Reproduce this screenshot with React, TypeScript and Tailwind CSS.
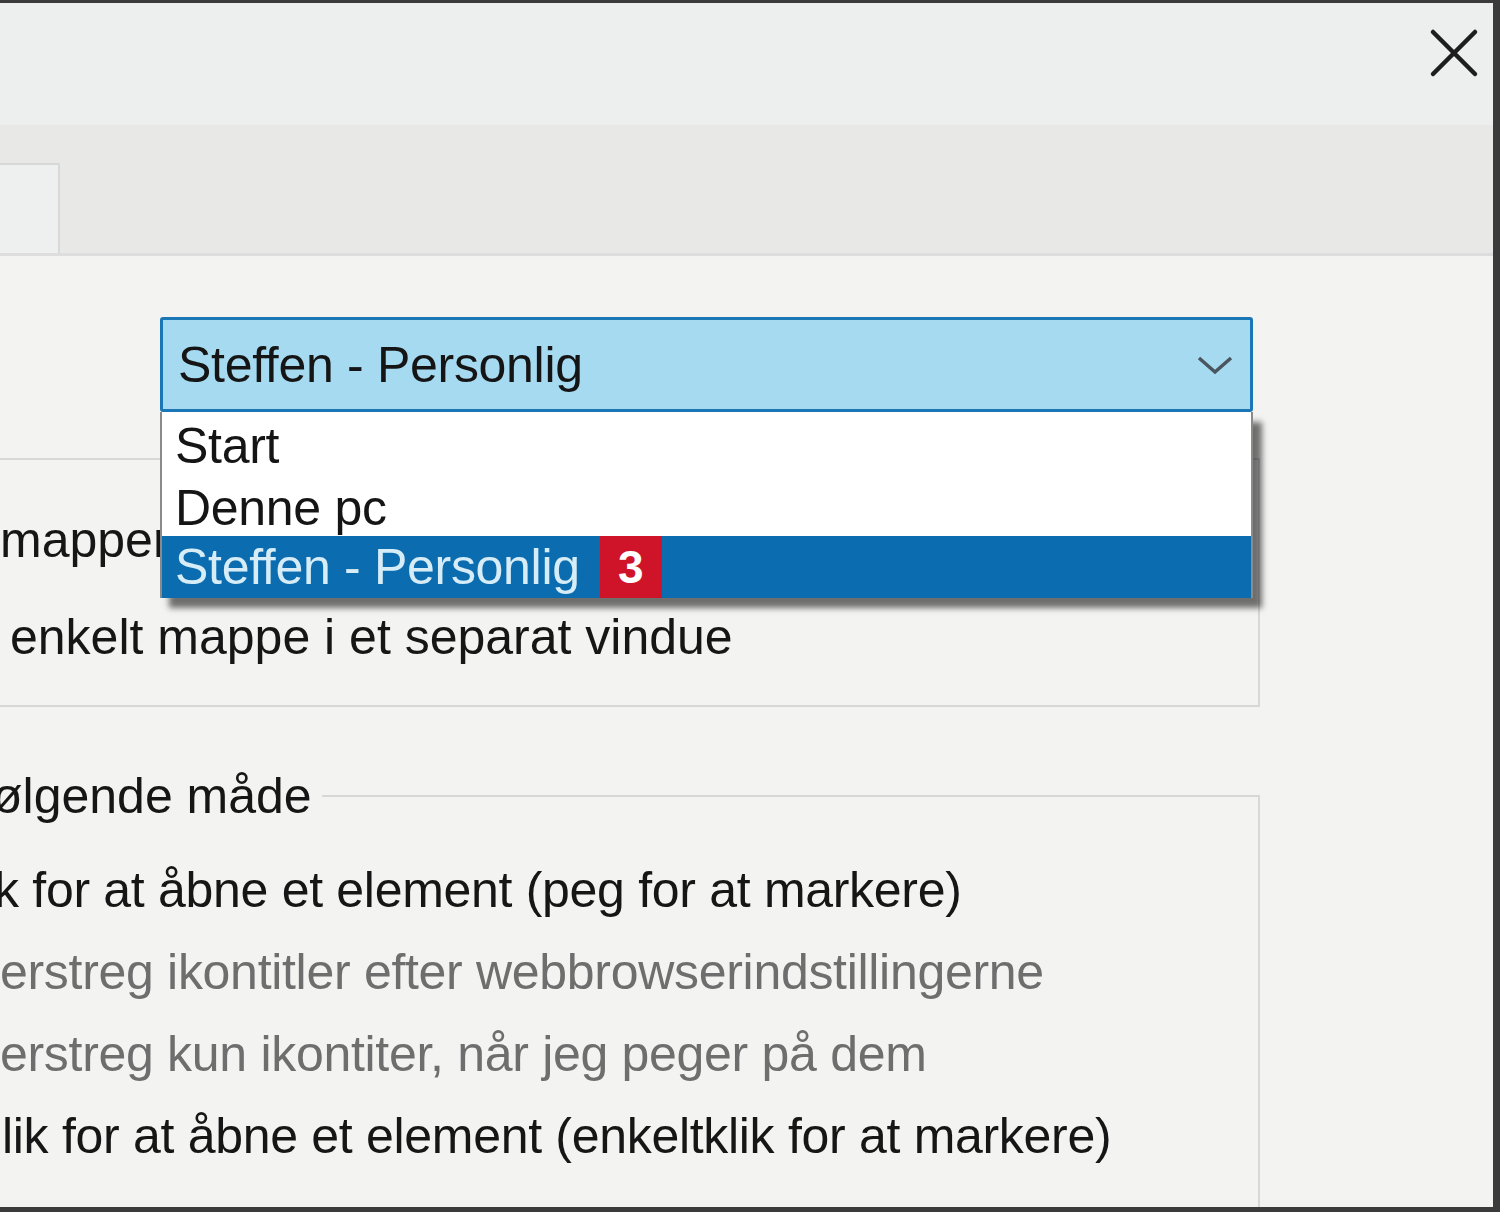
const FONT = "font-['Liberation_Sans',Arial,sans-serif]";

const OPTIONS = ["Start", "Denne pc", "Steffen - Personlig"];

const CLICK_ROWS = [
  { text: "k for at åbne et element (peg for at markere)", muted: false, indent: "-ml-[6px]" },
  { text: "erstreg ikontitler efter webbrowserindstillingerne", muted: true, indent: "ml-0" },
  { text: "erstreg kun ikontiter, når jeg peger på dem", muted: true, indent: "ml-0" },
  { text: "lik for at åbne et element (enkeltklik for at markere)", muted: false, indent: "ml-[2px]" },
];

function CloseIcon() {
  return (
    <svg width="52" height="52" viewBox="0 0 52 52" fill="none">
      <path d="M5 5 L47 47 M47 5 L5 47" stroke="#1e1e1e" strokeWidth="4.5" strokeLinecap="round" />
    </svg>
  );
}

function Chevron() {
  return (
    <svg width="38" height="24" viewBox="0 0 38 24" fill="none">
      <path d="M3 5 L19 19 L35 5" stroke="#4a5560" strokeWidth="3.5" />
    </svg>
  );
}

function ComboBox() {
  return (
    <div className="relative ml-[160px] w-[1093px] h-[95px] z-10">
      <div className="flex h-full items-center justify-between rounded-[3px] border-[3px] border-[#1b76b5] bg-[#a5daf0] pl-[15px] pr-[16px]">
        <span className="text-[50px] leading-none tracking-[-0.3px] text-[#151515]">Steffen - Personlig</span>
        <Chevron />
      </div>
      <div className="absolute left-0 right-0 top-full flex flex-col border-x-2 border-[#8a8a8a] bg-white shadow-[9px_10px_6px_rgba(0,0,0,0.55)]">
        {OPTIONS.map((o, i) =>
          i === OPTIONS.length - 1 ? (
            <div key={o} className="flex h-[62px] items-center bg-[#0b6db0] pl-[13px]">
              <span className="text-[50px] leading-none tracking-[-0.3px] text-[#d6ecf7]">{o}</span>
              <span className="ml-[20px] flex h-[62px] w-[62px] items-center justify-center bg-[#cf1329] text-[46px] font-bold leading-none text-white">
                3
              </span>
            </div>
          ) : (
            <div key={o} className="flex h-[62px] items-center pl-[13px] pt-[6px]">
              <span className="text-[50px] leading-none tracking-[-0.3px] text-[#151515]">{o}</span>
            </div>
          )
        )}
      </div>
    </div>
  );
}

export default function App() {
  return (
    <div className={`${FONT} flex h-[1212px] w-[1500px] flex-col overflow-hidden border-t-[3px] border-r-[7px] border-b-[5px] border-[#3b3b3b] bg-[#f3f4f2]`}>
      {/* title bar */}
      <div className="flex h-[122px] shrink-0 items-start justify-end bg-[#ecefee] pr-[13px] pt-[24px]">
        <CloseIcon />
      </div>

      {/* tab strip */}
      <div className="flex h-[131px] shrink-0 items-end border-b-[3px] border-[#dcdddc] bg-[#e8e8e7]">
        <div className="h-[90px] w-[60px] rounded-tr-[2px] border-r-2 border-t-2 border-[#d7d9d8] bg-[#eef0ef]" />
      </div>

      {/* content */}
      <div className="flex flex-1 flex-col pt-[61px]">
        <ComboBox />

        <div className="-ml-[20px] mt-[46px] flex h-[249px] w-[1280px] shrink-0 flex-col border-2 border-[#d6d7d6] pt-[50px]">
          <div className="flex h-[60px] items-center pl-[18px] text-[50px] leading-none text-[#161616]">
            mapper i samme vindue
          </div>
          <div className="mt-[37px] flex h-[60px] items-center pl-[28px] text-[50px] leading-none text-[#161616]">
            enkelt mappe i et separat vindue
          </div>
        </div>

        <div className="-ml-[20px] mt-[88px] flex w-[1280px] flex-1 flex-col border-r-2 border-t-2 border-[#d6d7d6]">
          <div className="-mt-[31px] flex h-[60px] items-center">
            <span className="bg-[#f3f4f2] pl-[12px] pr-[10px] text-[50px] leading-none text-[#161616]">
              ølgende måde
            </span>
          </div>
          <div className="mt-[34px] flex flex-col gap-[22px] pl-[20px]">
            {CLICK_ROWS.map((r) => (
              <div
                key={r.text}
                className={`${r.indent} flex h-[60px] items-center whitespace-nowrap text-[50px] leading-none tracking-[-0.3px] ${
                  r.muted ? "text-[#6e6e6e]" : "text-[#161616]"
                }`}
              >
                {r.text}
              </div>
            ))}
          </div>
        </div>
      </div>
    </div>
  );
}
